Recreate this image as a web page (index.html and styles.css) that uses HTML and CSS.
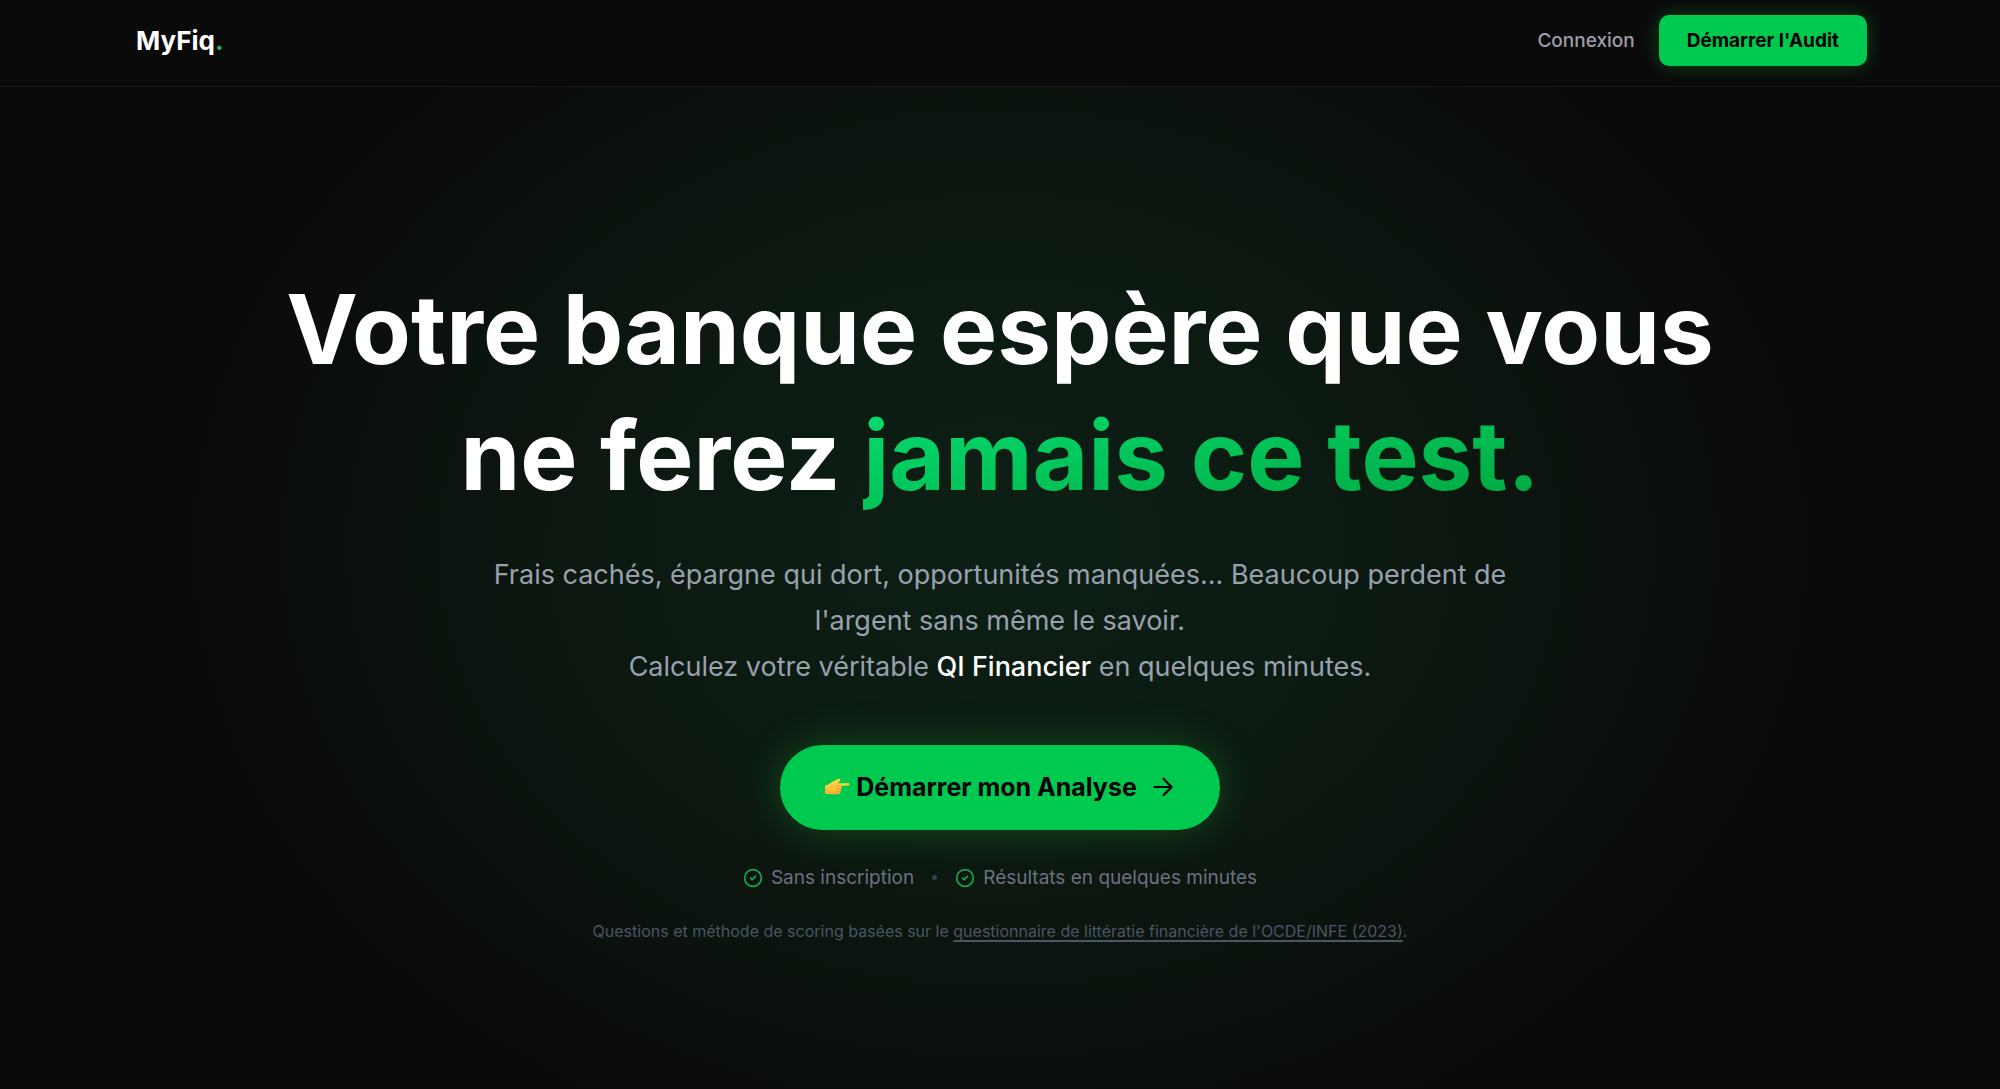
FILE: index.html
```
<!DOCTYPE html>
<html lang="fr">
<head>
  <meta charset="UTF-8">
  <meta name="viewport" content="width=device-width, initial-scale=1.0">
  <title>MyFiq</title>
  <link rel="stylesheet" href="styles.css">
</head>
<body>
  <header class="navbar">
    <a href="#" class="logo">MyFiq<span>.</span></a>
    <nav class="nav-links">
      <a href="#connexion" class="login">Connexion</a>
      <button type="button" class="btn btn-nav">Démarrer l'Audit</button>
    </nav>
  </header>

  <main class="hero">
    <h1>Votre banque espère que vous<br>ne ferez <span class="accent">jamais ce test.</span></h1>

    <p class="subtitle">
      Frais cachés, épargne qui dort, opportunités manquées... Beaucoup perdent de<br>
      l'argent sans même le savoir.<br>
      Calculez votre véritable <strong>QI Financier</strong> en quelques minutes.
    </p>

    <button type="button" class="btn btn-main">
      <svg class="hand" viewBox="0 0 26 20" aria-hidden="true">
        <defs>
          <linearGradient id="skin" x1="0" y1="0" x2="0" y2="1">
            <stop offset="0" stop-color="#ffdf4a"/>
            <stop offset="1" stop-color="#f9b02f"/>
          </linearGradient>
        </defs>
        <path fill="url(#skin)" d="M1 8.500C4 8 6 6.500 8.500 4.800L14 2C15.700 1.200 17 2.400 16 3.700L13.600 6.200H24.200C26 6.200 26 8.500 24.200 8.600L17 9.100C18 9.700 18 11.200 17 11.700C17.600 12.600 17.300 14 16.200 14.400C16.600 15.700 15.800 17.200 14.300 17.200H7C4.500 17.200 3 16.700 1 16.700Z"/>
        <path fill="none" stroke="#e9992a" stroke-width=".7" stroke-linecap="round" d="M12 9H17M12.500 11.700H16.700M12.500 14.400H16"/>
      </svg>
      <span>Démarrer mon Analyse</span>
      <svg class="arrow" viewBox="0 0 24 24" aria-hidden="true">
        <path d="M4 12h16M12.500 4.500L20 12l-7.500 7.500"/>
      </svg>
    </button>

    <ul class="trust">
      <li>
        <svg class="check" viewBox="0 0 24 24" aria-hidden="true">
          <circle cx="12" cy="12" r="10"/><path d="M9 12l2 2 4-4"/>
        </svg>
        Sans inscription
      </li>
      <li class="dot" aria-hidden="true"></li>
      <li>
        <svg class="check" viewBox="0 0 24 24" aria-hidden="true">
          <circle cx="12" cy="12" r="10"/><path d="M9 12l2 2 4-4"/>
        </svg>
        Résultats en quelques minutes
      </li>
    </ul>

    <p class="source">Questions et méthode de scoring basées sur le <a href="#source">questionnaire de littératie financière de l'OCDE/INFE (2023)</a>.</p>
  </main>
</body>
</html>
```
FILE: styles.css
```
:root {
  --bg: #0a0a0a;
  --green: #00c950;
  --gray: #99a1af;
  --gray-mid: #6a7282;
  --gray-dark: #4a5565;
}
* { box-sizing: border-box; margin: 0; padding: 0; }
body {
  min-height: 100vh;
  display: flex;
  flex-direction: column;
  background: var(--bg);
  color: #fff;
  font-family: Inter, "Liberation Sans", sans-serif;
}
a { color: inherit; text-decoration: none; }

/* navbar */
.navbar {
  display: flex;
  align-items: center;
  justify-content: space-between;
  padding: 15px 133px 20px 136px;
  border-bottom: 1px solid #191919;
}
.logo {
  font-size: 26px;
  font-weight: 700;
}
.logo span { color: #22b866; }
.nav-links {
  display: flex;
  align-items: center;
  gap: 24px;
}
.login {
  color: #9f9fa9;
  font-size: 19px;
  font-weight: 500;
}
.btn {
  border: none;
  background: var(--green);
  color: #000;
  font-family: inherit;
  font-weight: 700;
  cursor: pointer;
}
.btn-nav {
  height: 51px;
  padding: 0 28px;
  border-radius: 10px;
  font-size: 19px;
  box-shadow: 0 0 20px rgba(20, 200, 70, 0.3);
}

/* hero */
.hero {
  flex: 1;
  display: flex;
  flex-direction: column;
  align-items: center;
  justify-content: center;
  padding-top: 32px;
  text-align: center;
  background: radial-gradient(ellipse 820px 640px at 50% 46%, #0d1f14 0%, #0c1a11 40%, #0b120d 75%, var(--bg) 100%);
}
h1 {
  font-size: 96px;
  line-height: 126px;
  font-weight: 700;
}
.accent {
  background: linear-gradient(to bottom right, #05df72, #00a63e);
  -webkit-background-clip: text;
  background-clip: text;
  color: transparent;
}
.subtitle {
  margin-top: 34px;
  color: var(--gray);
  font-size: 27px;
  line-height: 46px;
}
.subtitle strong {
  color: #fff;
  font-weight: 500;
}
.btn-main {
  display: flex;
  align-items: center;
  height: 85px;
  margin-top: 55px;
  padding: 0 44px;
  border-radius: 43px;
  font-size: 25px;
  box-shadow: 0 0 40px rgba(40, 200, 70, 0.3);
}
.hand {
  width: 26px;
  height: 20px;
  margin-right: 6px;
}
.arrow {
  width: 26px;
  height: 26px;
  margin-left: 13px;
  fill: none;
  stroke: #000;
  stroke-width: 2;
  stroke-linecap: round;
  stroke-linejoin: round;
}
.trust {
  display: flex;
  align-items: center;
  gap: 18px;
  margin-top: 34px;
  list-style: none;
  color: var(--gray-mid);
  font-size: 19px;
  line-height: 28px;
}
.trust li {
  display: flex;
  align-items: center;
  gap: 8px;
}
.trust .dot {
  width: 5px;
  height: 5px;
  border-radius: 50%;
  background: #364153;
}
.check {
  width: 20px;
  height: 20px;
  fill: none;
  stroke: #16a752;
  stroke-width: 2;
  stroke-linecap: round;
  stroke-linejoin: round;
}
.source {
  margin-top: 27px;
  color: var(--gray-dark);
  font-size: 16px;
  line-height: 24px;
}
.source a {
  text-decoration: underline;
  text-decoration-thickness: 2px;
  text-decoration-skip-ink: none;
  text-underline-offset: 3px;
}
```
